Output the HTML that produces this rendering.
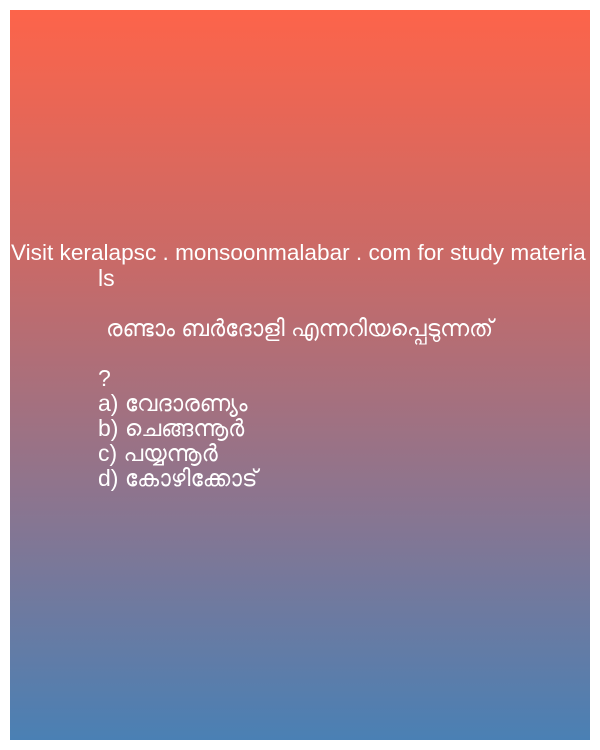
<!DOCTYPE html>
<html><head><meta charset="utf-8"><style>
html,body{margin:0;padding:0;background:#fff;width:600px;height:750px;overflow:hidden}
.box{position:absolute;left:10px;top:10px;width:580px;height:730px;background:linear-gradient(#fd644a,#c86a68 35%,#8a7590 68%,#4a80b4)}
.t{position:absolute;color:#fff;font-family:"Liberation Sans","Noto Sans CJK JP",sans-serif;font-size:23px;line-height:25px;white-space:nowrap}
</style></head><body>
<div class="box"></div>
<div class="t" style="left:11px;top:240px;font-size:22.6px">Visit keralapsc . monsoonmalabar . com for study materia</div>
<div class="t" style="left:98px;top:266px">ls</div>
<div class="t" style="left:106px;top:316px">രണ്ടാം ബർദോളി എന്നറിയപ്പെടുന്നത്</div>
<div class="t" style="left:98px;top:366px">?</div>
<div class="t" style="left:98px;top:391px">a) വേദാരണ്യം</div>
<div class="t" style="left:98px;top:416px">b) ചെങ്ങന്നൂർ</div>
<div class="t" style="left:98px;top:441px">c) പയ്യന്നൂർ</div>
<div class="t" style="left:98px;top:466px">d) കോഴിക്കോട്</div>
</body></html>
